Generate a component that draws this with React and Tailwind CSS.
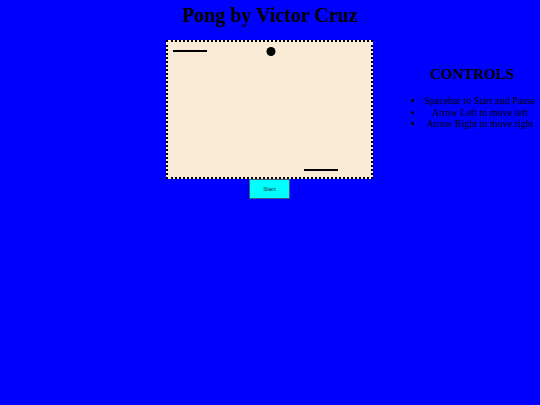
export default function App() {
  return (
    <div className="min-h-[405px] w-[540px] bg-[#0000ff] text-black" style={{ fontFamily: '"Liberation Serif", "Times New Roman", serif' }}>
      <h1 className="pt-[4px] text-center text-[20px] font-bold leading-[23px]">Pong by Victor Cruz</h1>
      <div className="mt-[13px] flex">
        <div className="w-[166px] shrink-0" />
        <div className="flex w-[207px] shrink-0 flex-col items-center">
          <div className="h-[139px] w-[207px] border-2 border-dotted border-black bg-[#faebd7]">
            <svg width="203" height="135" viewBox="0 0 203 135" className="block">
              <rect x="5" y="8" width="34" height="2" fill="#000" />
              <circle cx="103" cy="9.5" r="4.5" fill="#000" />
              <rect x="136" y="127" width="34" height="2" fill="#000" />
            </svg>
          </div>
          <button className="flex h-[20px] w-[41px] items-center justify-center border border-[#3a5a7a] bg-[#00ffff] text-[6px] text-[#1a3040]" style={{ fontFamily: '"Liberation Sans", Arial, sans-serif' }}>
            Start
          </button>
        </div>
        <div className="flex-1">
          <h2 className="mt-[25px] pl-[31px] text-center text-[15px] font-bold leading-[18px]">CONTROLS</h2>
          <ul className="mt-[12px] list-disc pl-[51px] pr-[4px] text-center text-[10px] leading-[11.5px]">
            <li>Spacebar to Start and Pause</li>
            <li>Arrow Left to move left</li>
            <li>Arrow Right to move right</li>
          </ul>
        </div>
      </div>
    </div>
  );
}
